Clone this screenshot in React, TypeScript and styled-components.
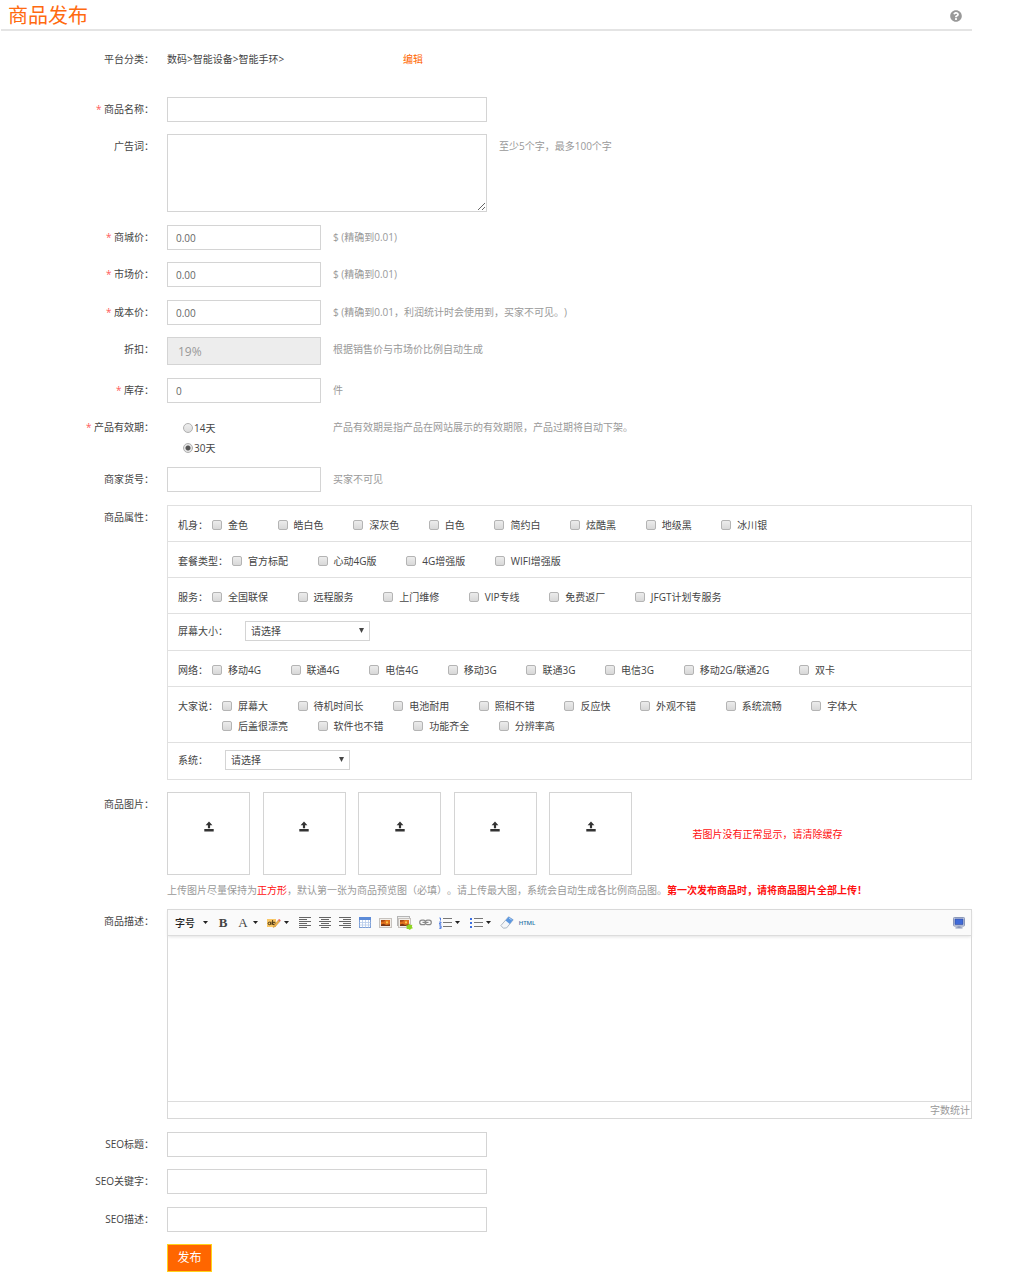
import React from "react";
import styled, { createGlobalStyle, css } from "styled-components";
import { FaQuestionCircle } from "react-icons/fa";

const GlobalStyle = createGlobalStyle`
  *, *::before, *::after { box-sizing: border-box; }
  body {
    margin: 0;
    background: #fff;
    color: #444;
    font: 10px/20px "Open Sans", "Noto Sans CJK SC", sans-serif;
    text-spacing-trim: space-all;
  }
  button, input, select, textarea { font: inherit; color: inherit; margin: 0; }
`;

const Page = styled.main`
  padding: 0 52px 8px 1px;
`;

const Header = styled.header`
  display: flex;
  align-items: center;
  justify-content: space-between;
  height: 31px;
  padding: 2px 10px 0 7px;
  border-bottom: 2px solid #e4e4e4;
`;

const Title = styled.h1`
  margin: 0;
  font-size: 20px;
  line-height: 26px;
  font-weight: 400;
  color: #ff6a10;
`;

const HelpButton = styled.button`
  display: flex;
  padding: 0;
  border: 0;
  background: none;
  color: #999;
  font-size: 12px;
`;

const Form = styled.form`
  padding-top: 16px;
`;

const Row = styled.div<{ $after?: number }>`
  display: grid;
  grid-template-columns: 153px minmax(0, 1fr);
  column-gap: 13px;
  align-items: start;
  margin-bottom: ${(p) => p.$after ?? 12}px;
`;

const labelStyle = css`
  line-height: 25px;
  text-align: right;
  white-space: nowrap;
`;

const Label = styled.label`
  ${labelStyle}
`;

const Caption = styled.span`
  ${labelStyle}
`;

const Star = styled.span`
  color: #ff5a5a;
`;

const Line = styled.div`
  display: flex;
  align-items: flex-start;
  gap: 12px;
`;

const Hint = styled.span`
  line-height: 25px;
  color: #999;
`;

const Category = styled.span`
  width: 224px;
  line-height: 25px;
`;

const EditLink = styled.a`
  line-height: 25px;
  color: #ff6600;
  text-decoration: none;
`;

const fieldBox = css`
  display: block;
  border: 1px solid #d4d4d4;
  border-radius: 0;
  background: #fff;
  outline: 0;
  padding: 0 8px;
`;

const TextInput = styled.input<{ $wide?: boolean }>`
  ${fieldBox}
  width: ${(p) => (p.$wide ? 320 : 154)}px;
  height: 25px;
  color: #666;
  &:disabled {
    height: 28px;
    padding: 0 10px;
    background: #ededed;
    color: #999;
    font-size: 12px;
  }
`;

const Slogan = styled.textarea`
  ${fieldBox}
  width: 320px;
  height: 78px;
`;

const RadioList = styled.div`
  width: 154px;
  padding: 3px 0 0 16px;
`;

const RadioItem = styled.label`
  display: flex;
  align-items: center;
  gap: 1px;
`;

const Radio = styled.input`
  appearance: none;
  width: 10px;
  height: 10px;
  border: 1px solid #b0b0b0;
  border-radius: 50%;
  background: linear-gradient(#eee, #ddd);
  &:checked {
    background: radial-gradient(circle, #555 0 2px, #e6e6e6 3px);
  }
`;

const Attributes = styled.div`
  border: 1px solid #e0e0e0;
  border-top: 0;
`;

const AttrRow = styled.div<{ $select?: boolean }>`
  display: flex;
  align-items: flex-start;
  border-top: 1px solid #e0e0e0;
  padding: ${(p) => (p.$select ? "7px 10px 9px" : "9px 10px 6px")};
`;

const AttrName = styled.span`
  flex: none;
  line-height: 20px;
`;

const Options = styled.div`
  flex: 1;
  padding-left: 4px;
`;

const Option = styled.label`
  display: inline-flex;
  align-items: center;
  gap: 6px;
  margin-right: 27px;
  vertical-align: top;
  white-space: nowrap;
`;

const Tick = styled.input`
  appearance: none;
  width: 10px;
  height: 10px;
  border: 1px solid #b4b4b4;
  border-radius: 2px;
  background: linear-gradient(#ececec, #d8d8d8);
  &:checked {
    background: #777;
  }
`;

const SelectWrap = styled.span`
  position: relative;
  margin-left: 17px;
`;

const Select = styled.select`
  display: block;
  appearance: none;
  width: 125px;
  height: 20px;
  padding: 0 5px;
  border: 1px solid #d4d4d4;
  border-radius: 0;
  background: #fff;
  line-height: 18px;
`;

const SelectArrow = styled.svg`
  position: absolute;
  top: 7px;
  right: 6px;
  width: 5px;
  height: 5px;
  pointer-events: none;
`;

const Uploads = styled.div`
  display: flex;
  align-items: center;
  gap: 50px;
`;

const UploadList = styled.div`
  height: 83px;
  white-space: nowrap;
`;

const UploadBox = styled.button`
  display: inline-flex;
  align-items: center;
  justify-content: center;
  width: 83px;
  height: 83px;
  margin-right: 10px;
  padding: 0 0 14px;
  border: 1px solid #d4d4d4;
  background: #fff;
  vertical-align: top;
  color: #333;
`;

const Warning = styled.span`
  color: #ff1010;
`;

const StrongWarning = styled.strong`
  color: #ff1010;
  font-weight: 700;
`;

const Note = styled.p`
  margin: 5px 0 0;
  color: #999;
`;

const Editor = styled.div`
  border: 1px solid #d8d8d8;
`;

const Toolbar = styled.div`
  position: relative;
  display: flex;
  align-items: center;
  height: 26px;
  background: #fafafa;
  border-bottom: 1px solid #dcdcdc;
  box-shadow: 0 1px 3px #e2e2e2;
`;

const Tool = styled.button<{ $menu?: boolean }>`
  display: flex;
  align-items: center;
  width: ${(p) => (p.$menu ? 31 : 20)}px;
  height: 20px;
  padding: 0;
  border: 0;
  background: none;
  color: #444;
`;

const SizeTool = styled(Tool)`
  gap: 8px;
  width: 45px;
  padding-left: 7px;
  font-weight: 500;
  color: #222;
`;

const ToolFace = styled.span`
  display: flex;
  flex: none;
  justify-content: center;
  width: 20px;
`;

const Letter = styled.span<{ $bold?: boolean }>`
  font: ${(p) => (p.$bold ? 700 : 400)} 13px/20px "Liberation Serif", serif;
`;

const HtmlWord = styled.span`
  font-size: 6px;
  font-weight: 600;
  color: #2d76a8;
`;

const FullScreen = styled(Tool)`
  margin-left: auto;
  margin-right: 2px;
`;

const EditorBody = styled.textarea`
  display: block;
  width: 100%;
  height: 165px;
  padding: 8px;
  border: 0;
  outline: 0;
  resize: none;
  background: transparent;
`;

const EditorStatus = styled.div`
  border-top: 1px solid #dcdcdc;
  padding-right: 1px;
  line-height: 16px;
  text-align: right;
  color: #999;
`;

const Submit = styled.button`
  width: 45px;
  height: 28px;
  padding: 0;
  border: 1px solid #ffd21a;
  background: #ff6600;
  color: #fff;
  font-size: 12px;
`;

const Caret = () => (
  <svg width="5" height="3" viewBox="0 0 5 3" aria-hidden="true">
    <path d="M0 0h5L2.5 3z" fill="#222" />
  </svg>
);

const UploadIcon = () => (
  <svg width="10" height="11" viewBox="0 0 10 11" aria-hidden="true">
    <path d="M5 0.5l3.4 3.7H6.1v3H3.9v-3H1.6zM0.3 8h9.4v2.4H0.3z" fill="currentColor" />
  </svg>
);

const AlignIcon = ({ side }: { side: "left" | "center" | "right" }) => {
  const short = side === "left" ? 0 : side === "center" ? 2 : 4;
  return (
    <svg width="12" height="11" viewBox="0 0 12 11" aria-hidden="true">
      <g fill="#666">
        <rect y="0" width="12" height="1" />
        <rect x={short} y="2" width="8" height="1" />
        <rect y="4" width="12" height="1" />
        <rect x={short} y="6" width="8" height="1" />
        <rect y="8" width="12" height="1" />
        <rect x={short} y="10" width="8" height="1" />
      </g>
    </svg>
  );
};

const MarkerIcon = () => (
  <svg width="14" height="12" viewBox="0 0 14 12" aria-hidden="true">
    <rect y="2" width="9" height="8" fill="#f9c766" />
    <circle cx="2.4" cy="6.4" r="1.3" fill="none" stroke="#3b2a10" strokeWidth="0.9" />
    <path d="M4 4.6v3.3M5.6 3v4.8" stroke="#3b2a10" strokeWidth="0.9" />
    <circle cx="7" cy="6.4" r="1.3" fill="none" stroke="#3b2a10" strokeWidth="0.9" />
    <path d="M6.2 10.6l1-2.6 4.2-5 1.6 1.2-4.3 5z" fill="#f0b24a" stroke="#b98a45" strokeWidth="0.5" />
    <path d="M11.2 3.1l0.9-1.1 1.7 1.2-0.9 1.2z" fill="#ec5f63" />
  </svg>
);

const TableIcon = () => (
  <svg width="12" height="11" viewBox="0 0 12 11" aria-hidden="true">
    <rect x="0.5" y="0.5" width="11" height="10" fill="#fff" stroke="#7d9fd6" />
    <rect x="0" y="0" width="12" height="3" fill="#5c8bd8" />
    <path d="M3.5 3v7.5M6.5 3v7.5M9.5 3v7.5M0.5 5.5h11M0.5 8h11" stroke="#b5caea" strokeWidth="0.8" />
  </svg>
);

const Picture = ({ x, y }: { x: number; y: number }) => (
  <g transform={`translate(${x} ${y})`}>
    <rect x="0.5" y="0.5" width="12" height="9" fill="#f1eeea" stroke="#c6c2be" />
    <rect x="2" y="2" width="9" height="6" fill="#e0701c" />
    <path d="M2 2h4.5L5 3.4 2 4z" fill="#a8460f" />
    <path d="M2 8V6.6l2.6-0.8 2.6 1.3L11 6.2V8z" fill="#7a3512" />
    <circle cx="8" cy="4.4" r="1.1" fill="#ffc94a" />
  </g>
);

const ImageIcon = () => (
  <svg width="13" height="10" viewBox="0 0 13 10" aria-hidden="true">
    <Picture x={0} y={0} />
  </svg>
);

const ImagesIcon = () => (
  <svg width="16" height="14" viewBox="0 0 16 14" aria-hidden="true">
    <rect x="0.5" y="0.5" width="12" height="9" fill="#eee" stroke="#b5b5b5" />
    <Picture x={1} y={2} />
    <path d="M12.3 7.4l1.1 1.5 1.9-.1-.4 1.9 1 1.6-1.8.4-1.2 1.2-1.5-.9-1.9.1.3-1.9-.8-1.7 1.9-.3z" fill="#8fd422" />
  </svg>
);

const LinkIcon = () => (
  <svg width="13" height="7" viewBox="0 0 13 7" fill="none" stroke="#8a8a8a" aria-hidden="true">
    <rect x="0.7" y="1.2" width="6" height="4.4" rx="2.2" strokeWidth="1.2" />
    <rect x="6.3" y="1.2" width="6" height="4.4" rx="2.2" strokeWidth="1.2" />
    <path d="M3.5 3.4h6" strokeWidth="1.2" />
  </svg>
);

const ListIcon = ({ ordered }: { ordered?: boolean }) => (
  <svg width="13" height="12" viewBox="0 0 13 12" aria-hidden="true">
    {ordered ? (
      <path d="M0.4 1h1.1v2.6M0.3 5h1.7v1.1H0.5v1.2h1.7M0.3 8.8h1.8v2.6H0.3M0.6 10.1h1.4" fill="none" stroke="#3d6fe0" strokeWidth="0.9" />
    ) : (
      <path d="M0 1h2v2H0zM0 5h2v2H0zM0 9h2v2H0z" fill="#3d6fe0" />
    )}
    <path d="M4 1.5h9M4 5.5h9M4 9.5h9" stroke="#777" />
  </svg>
);

const EraserIcon = () => (
  <svg width="14" height="13" viewBox="0 0 14 13" aria-hidden="true">
    <path d="M8.6 0.8l4.6 3-6.6 8.1-3.3.3L0.9 9.5z" fill="#f4f6f9" stroke="#9aa7b8" strokeWidth="0.8" />
    <path d="M8.6 0.8l4.6 3-3.4 4.2L5.5 4.4z" fill="#5b97e0" />
    <path d="M8.9 2l2.7 1.8" stroke="#b4d4fa" />
  </svg>
);

const ScreenIcon = () => (
  <svg width="12" height="12" viewBox="0 0 12 12" aria-hidden="true">
    <rect x="0.5" y="0.5" width="11" height="8.6" rx="0.8" fill="#c9d2e6" stroke="#8b98b8" />
    <rect x="2" y="2" width="8" height="5.4" fill="#3f6ad8" stroke="#2c479c" strokeWidth="0.6" />
    <path d="M4.5 9.2h3v1h2v1.3h-7v-1.3h2z" fill="#8b98b8" />
  </svg>
);

type Attr = { name: string; options?: string[] };

const attributes: Attr[] = [
  { name: "机身", options: ["金色", "皓白色", "深灰色", "白色", "简约白", "炫酷黑", "地级黑", "冰川银"] },
  { name: "套餐类型", options: ["官方标配", "心动4G版", "4G增强版", "WIFI增强版"] },
  { name: "服务", options: ["全国联保", "远程服务", "上门维修", "VIP专线", "免费返厂", "JFGT计划专服务"] },
  { name: "屏幕大小" },
  { name: "网络", options: ["移动4G", "联通4G", "电信4G", "移动3G", "联通3G", "电信3G", "移动2G/联通2G", "双卡"] },
  {
    name: "大家说",
    options: [
      "屏幕大", "待机时间长", "电池耐用", "照相不错", "反应快", "外观不错", "系统流畅", "字体大",
      "后盖很漂亮", "软件也不错", "功能齐全", "分辨率高",
    ],
  },
  { name: "系统" },
];

type FieldProps = {
  id: string;
  label: string;
  required?: boolean;
  wide?: boolean;
  value?: string;
  disabled?: boolean;
  hint?: string;
  after?: number;
};

const Field = ({ id, label, required, wide, value, disabled, hint, after }: FieldProps) => (
  <Row $after={after}>
    <Label htmlFor={id}>
      {required && <Star>* </Star>}
      {label}：
    </Label>
    <Line>
      <TextInput id={id} type="text" $wide={wide} defaultValue={value} disabled={disabled} />
      {hint && <Hint>{hint}</Hint>}
    </Line>
  </Row>
);

const AttributeRow = ({ name, options }: Attr) => {
  if (!options) {
    const id = `attr-${name}`;
    return (
      <AttrRow $select>
        <AttrName as="label" htmlFor={id}>{name}：</AttrName>
        <SelectWrap>
          <Select id={id} defaultValue="">
            <option value="">请选择</option>
          </Select>
          <SelectArrow viewBox="0 0 5 5" aria-hidden="true">
            <path d="M0 0h5L2.5 5z" fill="#444" />
          </SelectArrow>
        </SelectWrap>
      </AttrRow>
    );
  }
  return (
    <AttrRow role="group" aria-label={name}>
      <AttrName>{name}：</AttrName>
      <Options>
        {options.map((option) => (
          <React.Fragment key={option}>
            <Option>
              <Tick type="checkbox" name={name} value={option} />
              {option}
            </Option>{" "}
          </React.Fragment>
        ))}
      </Options>
    </AttrRow>
  );
};

const EditorToolbar = () => (
  <Toolbar role="toolbar" aria-label="商品描述">
    <SizeTool type="button">字号<Caret /></SizeTool>
    <Tool type="button"><ToolFace><Letter $bold>B</Letter></ToolFace></Tool>
    <Tool type="button" $menu><ToolFace><Letter>A</Letter></ToolFace><Caret /></Tool>
    <Tool type="button" $menu aria-label="背景色"><ToolFace><MarkerIcon /></ToolFace><Caret /></Tool>
    <Tool type="button" aria-label="左对齐"><ToolFace><AlignIcon side="left" /></ToolFace></Tool>
    <Tool type="button" aria-label="居中"><ToolFace><AlignIcon side="center" /></ToolFace></Tool>
    <Tool type="button" aria-label="右对齐"><ToolFace><AlignIcon side="right" /></ToolFace></Tool>
    <Tool type="button" aria-label="表格"><ToolFace><TableIcon /></ToolFace></Tool>
    <Tool type="button" aria-label="图片"><ToolFace><ImageIcon /></ToolFace></Tool>
    <Tool type="button" aria-label="多图上传"><ToolFace><ImagesIcon /></ToolFace></Tool>
    <Tool type="button" aria-label="超链接"><ToolFace><LinkIcon /></ToolFace></Tool>
    <Tool type="button" $menu aria-label="有序列表"><ToolFace><ListIcon ordered /></ToolFace><Caret /></Tool>
    <Tool type="button" $menu aria-label="无序列表"><ToolFace><ListIcon /></ToolFace><Caret /></Tool>
    <Tool type="button" aria-label="清除格式"><ToolFace><EraserIcon /></ToolFace></Tool>
    <Tool type="button"><ToolFace><HtmlWord>HTML</HtmlWord></ToolFace></Tool>
    <FullScreen type="button" aria-label="全屏"><ToolFace><ScreenIcon /></ToolFace></FullScreen>
  </Toolbar>
);

export default function App() {
  return (
    <>
      <GlobalStyle />
      <Page>
        <Header>
          <Title>商品发布</Title>
          <HelpButton type="button" aria-label="帮助"><FaQuestionCircle /></HelpButton>
        </Header>
        <Form onSubmit={(e) => e.preventDefault()}>
          <Row $after={25}>
            <Caption>平台分类：</Caption>
            <Line>
              <Category>数码&gt;智能设备&gt;智能手环&gt;</Category>
              <EditLink href="#category">编辑</EditLink>
            </Line>
          </Row>
          <Field id="name" label="商品名称" required wide />
          <Row $after={13}>
            <Label htmlFor="slogan">广告词：</Label>
            <Line>
              <Slogan id="slogan" />
              <Hint>至少5个字，最多100个字</Hint>
            </Line>
          </Row>
          <Field id="price" label="商城价" required value="0.00" hint="$ (精确到0.01)" />
          <Field id="market" label="市场价" required value="0.00" hint="$ (精确到0.01)" after={13} />
          <Field id="cost" label="成本价" required value="0.00" hint="$ (精确到0.01，利润统计时会使用到，买家不可见。)" />
          <Field id="discount" label="折扣" value="19%" disabled hint="根据销售价与市场价比例自动生成" after={13} />
          <Field id="stock" label="库存" required value="0" hint="件" />
          <Row $after={9}>
            <Caption><Star>* </Star>产品有效期：</Caption>
            <Line>
              <RadioList role="radiogroup" aria-label="产品有效期">
                <RadioItem><Radio type="radio" name="period" value="14" />14天</RadioItem>
                <RadioItem><Radio type="radio" name="period" value="30" defaultChecked />30天</RadioItem>
              </RadioList>
              <Hint>产品有效期是指产品在网站展示的有效期限，产品过期将自动下架。</Hint>
            </Line>
          </Row>
          <Field id="sku" label="商家货号" hint="买家不可见" after={13} />
          <Row>
            <Caption>商品属性：</Caption>
            <Attributes>
              {attributes.map((attr) => <AttributeRow key={attr.name} {...attr} />)}
            </Attributes>
          </Row>
          <Row $after={9}>
            <Caption>商品图片：</Caption>
            <div>
              <Uploads>
                <UploadList>
                  {[1, 2, 3, 4, 5].map((n) => (
                    <React.Fragment key={n}>
                      <UploadBox type="button" aria-label={`上传图片${n}`}><UploadIcon /></UploadBox>{" "}
                    </React.Fragment>
                  ))}
                </UploadList>
                <Warning>若图片没有正常显示，请清除缓存</Warning>
              </Uploads>
              <Note>
                上传图片尽量保持为<Warning>正方形</Warning>，默认第一张为商品预览图（必填）。请上传最大图，系统会自动生成各比例商品图。
                <StrongWarning>第一次发布商品时，请将商品图片全部上传！</StrongWarning>
              </Note>
            </div>
          </Row>
          <Row $after={13}>
            <Label htmlFor="description">商品描述：</Label>
            <Editor>
              <EditorToolbar />
              <EditorBody id="description" />
              <EditorStatus>字数统计</EditorStatus>
            </Editor>
          </Row>
          <Field id="seo-title" label="SEO标题" wide />
          <Field id="seo-keywords" label="SEO关键字" wide after={13} />
          <Field id="seo-description" label="SEO描述" wide />
          <Row $after={0}>
            <span />
            <Line><Submit type="submit">发布</Submit></Line>
          </Row>
        </Form>
      </Page>
    </>
  );
}
